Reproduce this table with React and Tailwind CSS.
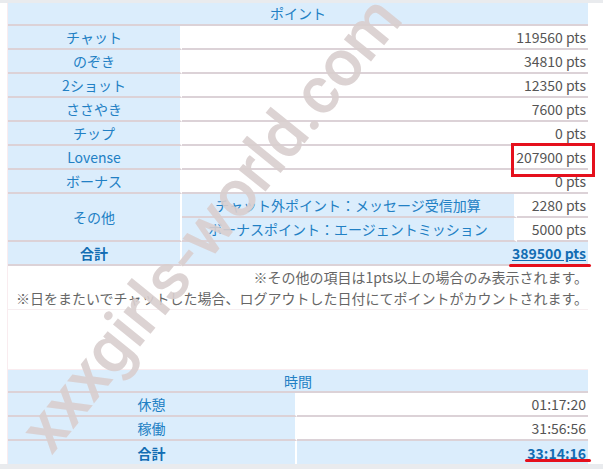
import React from "react";

const pointRows = [
  { label: "チャット", value: "119560 pts" },
  { label: "のぞき", value: "34810 pts" },
  { label: "2ショット", value: "12350 pts" },
  { label: "ささやき", value: "7600 pts" },
  { label: "チップ", value: "0 pts" },
  { label: "Lovense", value: "207900 pts" },
  { label: "ボーナス", value: "0 pts" },
];

const otherRows = [
  { label: "チャット外ポイント：メッセージ受信加算", value: "2280 pts" },
  { label: "ボーナスポイント：エージェントミッション", value: "5000 pts" },
];

const timeRows = [
  { label: "休憩", value: "01:17:20" },
  { label: "稼働", value: "31:56:56" },
];

export default function App() {
  return (
    <div
      className="relative min-h-screen overflow-hidden bg-[#e9ebee] pt-[3px] text-[14px]"
      style={{ fontFamily: '"Noto Sans CJK JP", "Noto Sans", sans-serif' }}
    >
      <div className="h-[461px] overflow-hidden bg-white pl-[7px]">
        <div className="w-[581px] border-l border-[#f9ecef]">
          {/* ポイント */}
          <table className="w-[580px] table-fixed border-separate border-spacing-0">
            <colgroup>
              <col className="w-[174px]" />
              <col className="w-[335px]" />
              <col className="w-[71px]" />
            </colgroup>
            <thead>
              <tr>
                <th
                  colSpan={3}
                  className="h-[22px] border-b-2 border-[#dcd2d7] bg-[#dbedfc] p-0 text-center font-normal leading-[21px] text-[#2280c4]"
                >
                  ポイント
                </th>
              </tr>
            </thead>
            <tbody>
              {pointRows.map((row) => (
                <tr key={row.label}>
                  <td className="h-[24px] border-b-2 border-r-2 border-b-[#dcd2d7] border-r-white bg-[#dbedfc] p-0 pt-[1px] text-center leading-[21px] text-[#2280c4]">
                    {row.label}
                  </td>
                  <td
                    colSpan={2}
                    className="h-[24px] border-b-2 border-[#dcd2d7] bg-white p-0 pr-[2px] pt-[1px] text-right leading-[21px] text-[#555]"
                  >
                    {row.value}
                  </td>
                </tr>
              ))}
              {otherRows.map((row, idx) => (
                <tr key={row.label}>
                  {idx === 0 && (
                    <td
                      rowSpan={2}
                      className="border-b-2 border-r-2 border-b-[#dcd2d7] border-r-white bg-[#dbedfc] p-0 text-center text-[#2280c4]"
                    >
                      その他
                    </td>
                  )}
                  <td className="h-[24px] border-b-2 border-r-[3px] border-b-[#dcd2d7] border-r-white bg-[#dbedfc] p-0 pt-[1px] text-center leading-[21px] text-[#2280c4]">
                    {row.label}
                  </td>
                  <td className="h-[24px] border-b-2 border-[#dcd2d7] bg-white p-0 pr-[2px] pt-[1px] text-right leading-[21px] text-[#555]">
                    {row.value}
                  </td>
                </tr>
              ))}
              <tr>
                <td className="h-[24px] border-b-2 border-r-2 border-b-[#dcd2d7] border-r-white bg-[#dbedfc] p-0 pt-[1px] text-center font-bold leading-[21px] text-[#136db3]">
                  合計
                </td>
                <td
                  colSpan={2}
                  className="h-[24px] border-b-2 border-[#dcd2d7] bg-[#dbedfc] p-0 pr-[2px] pt-[1px] text-right font-bold leading-[21px] text-[#136db3]"
                >
                  <span className="underline">389500 pts</span>
                </td>
              </tr>
            </tbody>
          </table>

          <div className="border-b border-[#f6eef0] pt-[1px] text-right leading-[21px] text-[#666]">
            <p>※その他の項目は1pts以上の場合のみ表示されます。</p>
            <p>※日をまたいでチャットした場合、ログアウトした日付にてポイントがカウントされます。</p>
          </div>

          <div className="h-[59px]" />

          {/* 時間 */}
          <table className="w-[580px] table-fixed border-separate border-spacing-0 border-t border-[#f9ecef]">
            <colgroup>
              <col className="w-[289px]" />
              <col className="w-[291px]" />
            </colgroup>
            <thead>
              <tr>
                <th
                  colSpan={2}
                  className="h-[23px] border-b-2 border-[#dcd2d7] bg-[#dbedfc] p-0 pt-[1px] text-center font-normal leading-[20px] text-[#2280c4]"
                >
                  時間
                </th>
              </tr>
            </thead>
            <tbody>
              {timeRows.map((row) => (
                <tr key={row.label}>
                  <td className="h-[24px] border-b-2 border-r-2 border-b-[#dcd2d7] border-r-white bg-[#dbedfc] p-0 pt-[1px] text-center leading-[21px] text-[#2280c4]">
                    {row.label}
                  </td>
                  <td className="h-[24px] border-b-2 border-[#dcd2d7] bg-white p-0 pr-[2px] pt-[1px] text-right leading-[21px] text-[#555]">
                    {row.value}
                  </td>
                </tr>
              ))}
              <tr>
                <td className="h-[24px] border-r-2 border-r-white bg-[#dbedfc] p-0 pt-[1px] text-center font-bold leading-[23px] text-[#136db3]">
                  合計
                </td>
                <td className="h-[24px] bg-[#dbedfc] p-0 pr-[2px] pt-[1px] text-right font-bold leading-[23px] text-[#136db3]">
                  <span className="underline">33:14:16</span>
                </td>
              </tr>
            </tbody>
          </table>
        </div>
      </div>

      {/* watermark */}
      <div className="pointer-events-none absolute left-[211px] top-[224px] -translate-x-1/2 -translate-y-1/2 -rotate-[51deg] whitespace-nowrap font-['Roboto',sans-serif] text-[66px] font-medium leading-none text-[#d9cfcf] opacity-90">
        xxxgirls-world.com
      </div>

      {/* red markup */}
      <div className="pointer-events-none absolute left-[511px] top-[143px] h-[34px] w-[84px] border-[3px] border-[#e5101c]" />
      <div className="pointer-events-none absolute left-[509px] top-[264px] h-[3px] w-[82px] rounded-full bg-[#e5101c]" />
      <div className="pointer-events-none absolute left-[525px] top-[459px] h-[3px] w-[66px] rounded-full bg-[#e5101c]" />
    </div>
  );
}
